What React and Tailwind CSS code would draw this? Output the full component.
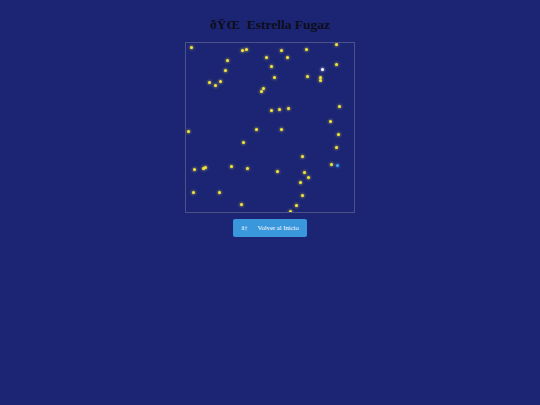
import React from "react";

const stars = [
  [191,47],[242,50],[246,49],[281,50],[306,49],[336,44],[227,60],[266,57],[287,57],[225,70],
  [271,66],[336,64],[209,82],[215,85],[220,81],[274,77],[307,76],[320,77],[320,80],[263,88],
  [261,91],[271,110],[279,109],[288,108],[339,106],[330,121],[188,131],[256,129],[281,129],
  [338,134],[243,142],[336,147],[302,156],[194,169],[203,168],[205,167],[231,166],[247,168],
  [277,171],[304,172],[308,177],[331,164],[300,182],[193,192],[219,192],[302,195],[241,204],
  [296,205],[290,211]
];

export default function App() {
  return (
    <div className="min-h-screen w-full bg-[#1b2574] flex flex-col items-center" style={{ fontFamily: '"Liberation Serif", "Times New Roman", serif' }}>
      <h1 className="mt-[17px] mb-[10px] text-[13.5px] leading-[15px] font-bold text-[#0d0d1a]">
        {"\u00F0\u0178\u0152\u00A0 Estrella Fugaz"}
      </h1>
      <div className="relative w-[170px] h-[171px] border border-[#4a5288] overflow-hidden">
        {stars.map(([x, y], i) => (
          <div
            key={i}
            className="absolute w-[3px] h-[3px] rounded-full bg-[#f5e63a] shadow-[0_0_3px_#ffeb3b]"
            style={{ left: x - 186 - 1.5, top: y - 43 - 1.5 }}
          />
        ))}
        <div
          className="absolute w-[3px] h-[3px] rounded-full bg-white shadow-[0_0_3px_#ffffff]"
          style={{ left: 322 - 186 - 1.5, top: 69 - 43 - 1.5 }}
        />
        <div
          className="absolute w-[3px] h-[3px] rounded-full bg-[#42a5f5] shadow-[0_0_3px_#42a5f5]"
          style={{ left: 337 - 186 - 1.5, top: 165 - 43 - 1.5 }}
        />
      </div>
      <button className="mt-[6px] h-[18px] px-[8px] rounded-[2px] bg-[#3a97dc] text-white text-[6.67px] leading-none flex items-center">
        <span className="mr-[10px]">{"\u00E2\u2020"}</span>
        <span>Volver al Inicio</span>
      </button>
    </div>
  );
}
